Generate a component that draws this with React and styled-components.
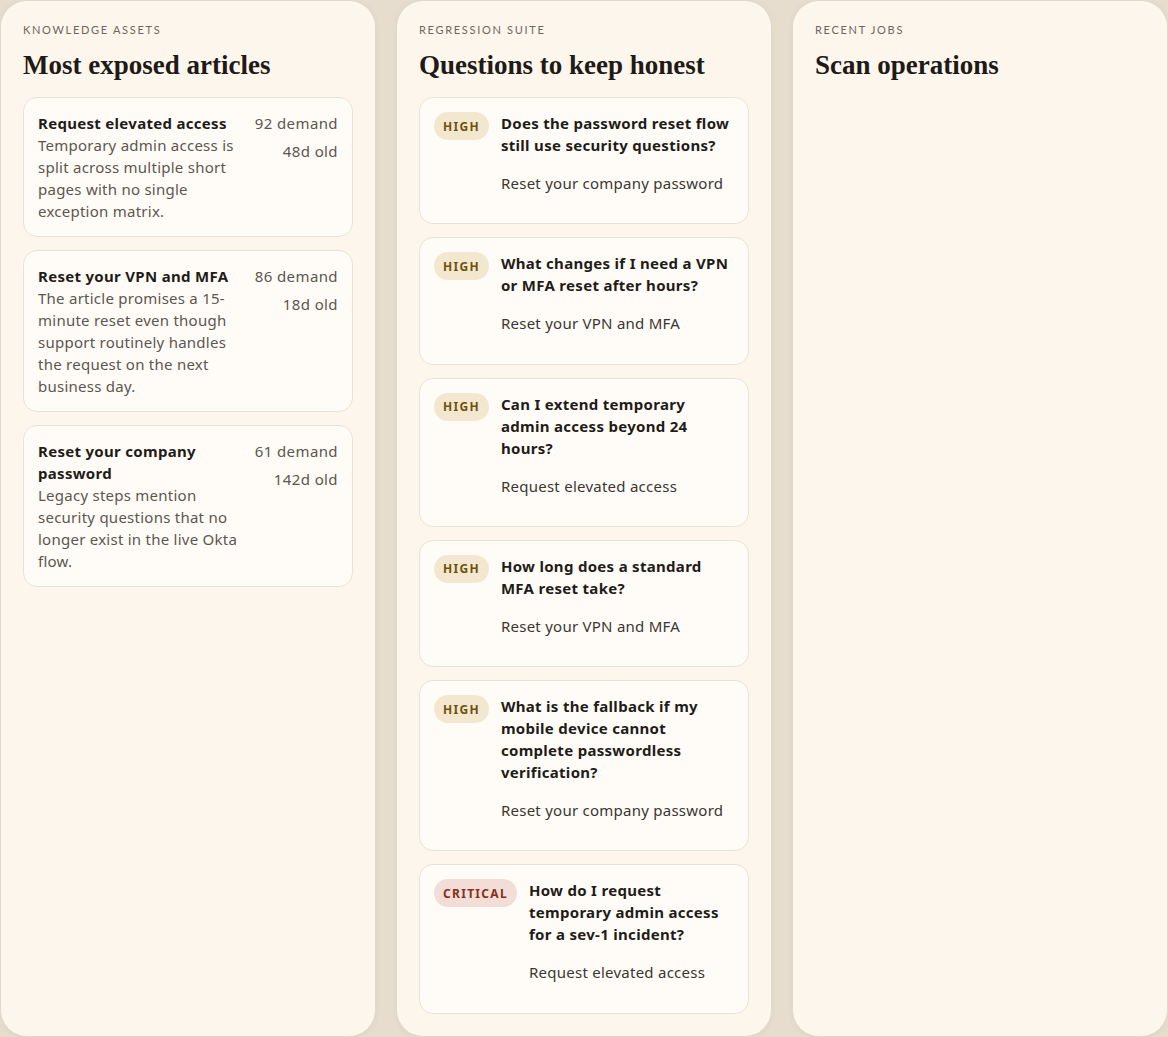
import styled, { createGlobalStyle } from 'styled-components'

const GlobalStyle = createGlobalStyle`
  html, body {
    margin: 0;
    padding: 0;
    background: #e6ddcf;
  }
  body {
    font-family: 'Noto Sans', Lato, sans-serif;
    color: #1f1c18;
  }
`

const Board = styled.div`
  box-sizing: border-box;
  min-height: 100vh;
  display: grid;
  grid-template-columns: repeat(3, 374px);
  gap: 22px;
  padding: 1px 1px 2px 1px;
  align-items: stretch;
`

const Panel = styled.section`
  background: #fdf6ec;
  border-radius: 26px;
  padding: 22px;
  box-shadow: 0 1px 6px rgba(120, 96, 60, 0.08);
  display: flex;
  flex-direction: column;
`

const Eyebrow = styled.div`
  font-family: Lato, 'Noto Sans', sans-serif;
  font-size: 11px;
  letter-spacing: 1.7px;
  text-transform: uppercase;
  color: #6d665e;
  line-height: 14px;
`

const Heading = styled.h2`
  margin: 13px 0 17px;
  font-family: 'Liberation Serif', 'DejaVu Serif', serif;
  font-weight: 700;
  font-size: 27px;
  line-height: 30px;
  color: #1e1b17;
`

const Stack = styled.div`
  display: flex;
  flex-direction: column;
  gap: 13px;
`

const Card = styled.div`
  background: #fffcf8;
  border: 1px solid #ebe2d6;
  border-radius: 14px;
  padding: ${(p) => (p.tall ? '14px 14px 29.25px' : '14px')};
`

const ArticleRow = styled.div`
  display: flex;
  justify-content: space-between;
  gap: 14px;
`

const ArticleText = styled.div`
  flex: 1;
  min-width: 0;
`

const Title = styled.div`
  font-size: 15px;
  font-weight: 700;
  line-height: 22px;
  letter-spacing: 0.3px;
  color: #1f1c18;
`

const Desc = styled.div`
  font-size: 15px;
  line-height: 22px;
  letter-spacing: 0.25px;
  color: #5c564f;
`

const Metrics = styled.div`
  display: flex;
  flex-direction: column;
  align-items: flex-end;
  gap: 6px;
  font-size: 15px;
  line-height: 22px;
  letter-spacing: 0.4px;
  color: #5c564f;
  white-space: nowrap;
`

const QuestionRow = styled.div`
  display: flex;
  align-items: flex-start;
  gap: 12px;
`

const Badge = styled.span`
  flex: none;
  display: inline-flex;
  align-items: center;
  height: 28px;
  padding: 0 9px;
  border-radius: 14px;
  font-size: 12px;
  font-weight: 700;
  letter-spacing: 1.3px;
  background: ${(p) => (p.level === 'critical' ? '#f2ded6' : '#f4e7cf')};
  color: ${(p) => (p.level === 'critical' ? '#86301c' : '#6f510c')};
`

const QuestionBody = styled.div`
  flex: 1;
  display: flex;
  flex-direction: column;
  gap: 16px;
`

const Source = styled.div`
  font-size: 15px;
  line-height: 22px;
  letter-spacing: 0.25px;
  color: #3b3631;
`

const articles = [
  {
    title: 'Request elevated access',
    desc: 'Temporary admin access is split across multiple short pages with no single exception matrix.',
    demand: 92,
    age: 48,
  },
  {
    title: 'Reset your VPN and MFA',
    desc: 'The article promises a 15-minute reset even though support routinely handles the request on the next business day.',
    demand: 86,
    age: 18,
  },
  {
    title: 'Reset your company password',
    desc: 'Legacy steps mention security questions that no longer exist in the live Okta flow.',
    demand: 61,
    age: 142,
  },
]

const questions = [
  { level: 'high', q: 'Does the password reset flow still use security questions?', src: 'Reset your company password' },
  { level: 'high', q: 'What changes if I need a VPN or MFA reset after hours?', src: 'Reset your VPN and MFA' },
  { level: 'high', q: 'Can I extend temporary admin access beyond 24 hours?', src: 'Request elevated access' },
  { level: 'high', q: 'How long does a standard MFA reset take?', src: 'Reset your VPN and MFA' },
  {
    level: 'high',
    q: 'What is the fallback if my mobile device cannot complete passwordless verification?',
    src: 'Reset your company password',
  },
  { level: 'critical', q: 'How do I request temporary admin access for a sev-1 incident?', src: 'Request elevated access' },
]

const App = () => {
  return (
    <>
      <GlobalStyle />
      <Board>
        <Panel>
          <Eyebrow>Knowledge assets</Eyebrow>
          <Heading>Most exposed articles</Heading>
          <Stack>
            {articles.map((a) => (
              <Card key={a.title}>
                <ArticleRow>
                  <ArticleText>
                    <Title>{a.title}</Title>
                    <Desc>{a.desc}</Desc>
                  </ArticleText>
                  <Metrics>
                    <span>{a.demand} demand</span>
                    <span>{a.age}d old</span>
                  </Metrics>
                </ArticleRow>
              </Card>
            ))}
          </Stack>
        </Panel>
        <Panel>
          <Eyebrow>Regression suite</Eyebrow>
          <Heading>Questions to keep honest</Heading>
          <Stack>
            {questions.map((item) => (
              <Card tall key={item.q}>
                <QuestionRow>
                  <Badge level={item.level}>{item.level.toUpperCase()}</Badge>
                  <QuestionBody>
                    <Title>{item.q}</Title>
                    <Source>{item.src}</Source>
                  </QuestionBody>
                </QuestionRow>
              </Card>
            ))}
          </Stack>
        </Panel>
        <Panel>
          <Eyebrow>Recent jobs</Eyebrow>
          <Heading>Scan operations</Heading>
        </Panel>
      </Board>
    </>
  )
}

export default App
